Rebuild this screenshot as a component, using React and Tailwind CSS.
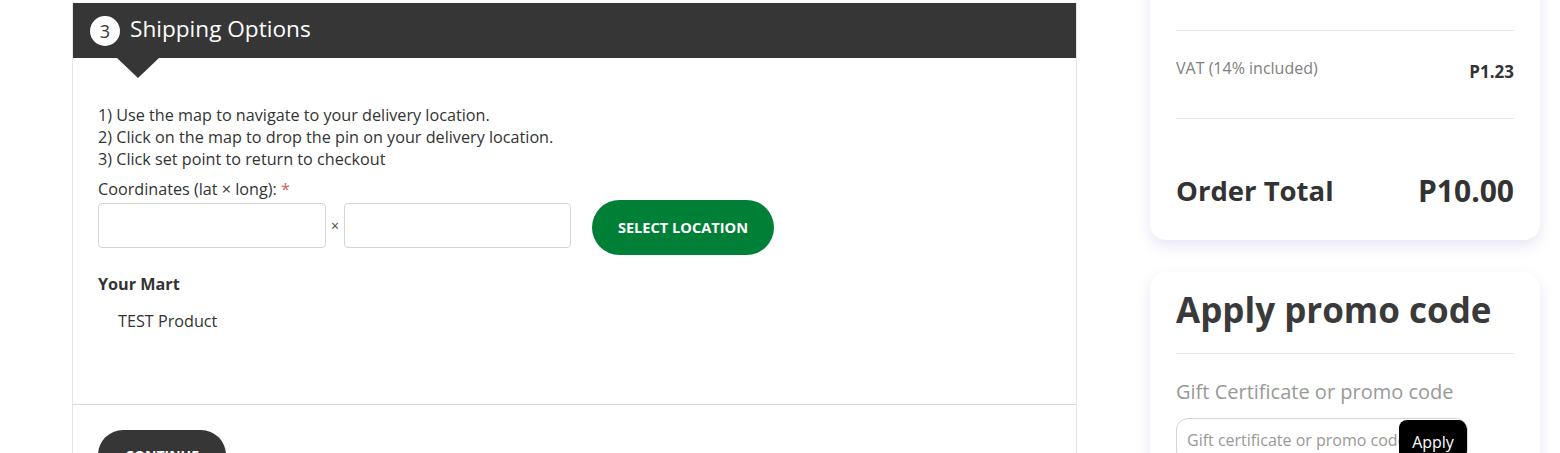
import React from "react";

export default function App() {
  return (
    <div
      className="w-[1560px] h-[453px] overflow-hidden bg-white flex text-[#333]"
      style={{ fontFamily: '"Open Sans", "Liberation Sans", sans-serif' }}
    >
      {/* shipping step */}
      <div className="ml-[72px] mt-[3px] w-[1005px] shrink-0 flex flex-col border-l border-r border-[#e6e6e6] h-[600px]">
        <div className="relative h-[55px] shrink-0 bg-[#363636] flex items-center pl-[17px] gap-[10px]">
          <div className="w-[30px] h-[30px] rounded-full bg-white text-[#363636] grid place-items-center text-[18px] leading-none">
            3
          </div>
          <div className="text-white text-[22.6px] leading-none pb-[2px]">Shipping Options</div>
          <div className="absolute left-[44px] top-[55px] w-0 h-0 border-l-[21px] border-r-[21px] border-t-[20px] border-l-transparent border-r-transparent border-t-[#363636]" />
        </div>

        <div className="pl-[25px] pt-[46px] h-[347px] shrink-0 border-b border-[#d9d9d9]">
          <div className="text-[16.2px] leading-[22px]">
            <div>1) Use the map to navigate to your delivery location.</div>
            <div>2) Click on the map to drop the pin on your delivery location.</div>
            <div>3) Click set point to return to checkout</div>
          </div>
          <div className="mt-[8px] text-[16.2px] leading-[22px]">
            Coordinates (lat × long): <span className="text-[#e05a5a]">*</span>
          </div>
          <div className="flex items-start mt-[3px]">
            <input className="w-[228px] h-[45px] border border-[#d4d4d4] rounded-[4px] outline-none" />
            <span className="w-[18px] h-[45px] flex items-center justify-center text-[14px] text-[#444]">×</span>
            <input className="w-[227px] h-[45px] border border-[#d4d4d4] rounded-[4px] outline-none" />
            <button className="ml-[21px] -mt-[3px] w-[182px] h-[55px] rounded-full bg-[#008037] text-white font-bold text-[14.6px] uppercase">
              Select Location
            </button>
          </div>
          <div className="mt-[18px] font-bold text-[16.2px] leading-[22px]">Your Mart</div>
          <div className="mt-[15px] ml-[20px] text-[16.2px] leading-[22px]">TEST Product</div>
        </div>

        <div className="pl-[25px] pt-[25px]">
          <button className="w-[128px] h-[50px] rounded-full bg-[#363636] text-white font-bold text-[14px] uppercase">
            Continue
          </button>
        </div>
      </div>

      {/* summary column */}
      <div className="ml-[73px] w-[390px] shrink-0 flex flex-col gap-[32px]">
        <div className="-mt-[40px] h-[280px] shrink-0 bg-white rounded-[16px] shadow-[0_6px_14px_rgba(120,120,210,0.18)] px-[26px] flex flex-col">
          <div className="h-[71px] shrink-0 border-b border-[#e8e8e8] flex items-end pb-[30px] text-[16px] text-[#777]">
            Pay,
          </div>
          <div className="h-[88px] shrink-0 border-b border-[#e8e8e8] flex justify-between pt-[26px]">
            <span className="text-[16px] text-[#808080] leading-[22px]">VAT (14% included)</span>
            <span className="text-[17px] font-bold text-[#333] leading-[22px] mt-[4px]">P1.23</span>
          </div>
          <div className="flex justify-between items-center pt-[58px]">
            <span className="text-[27.5px] font-bold text-[#333] leading-[28px]">Order Total</span>
            <span className="text-[30px] font-bold text-[#333] leading-[28px]">P10.00</span>
          </div>
        </div>

        <div className="h-[250px] shrink-0 bg-white rounded-[16px] shadow-[0_6px_14px_rgba(120,120,210,0.18)] px-[26px] flex flex-col">
          <div className="pt-[14px] pb-[19px] border-b border-[#e8e8e8] text-[35px] font-bold text-[#3a3a3a] leading-[48px]">
            Apply promo code
          </div>
          <div className="mt-[25px] text-[20px] text-[#999] leading-[26px]">Gift Certificate or promo code</div>
          <div className="mt-[13px] relative w-[292px] h-[44px] border border-[#d4d4d4] rounded-[12px] flex items-center pl-[10px] overflow-hidden">
            <span className="text-[16px] text-[#999] whitespace-nowrap">Gift certificate or promo code</span>
            <button className="absolute right-[0px] top-[1px] h-[44px] w-[68px] rounded-[8px] bg-black text-white text-[16px]">
              Apply
            </button>
          </div>
        </div>
      </div>
    </div>
  );
}
